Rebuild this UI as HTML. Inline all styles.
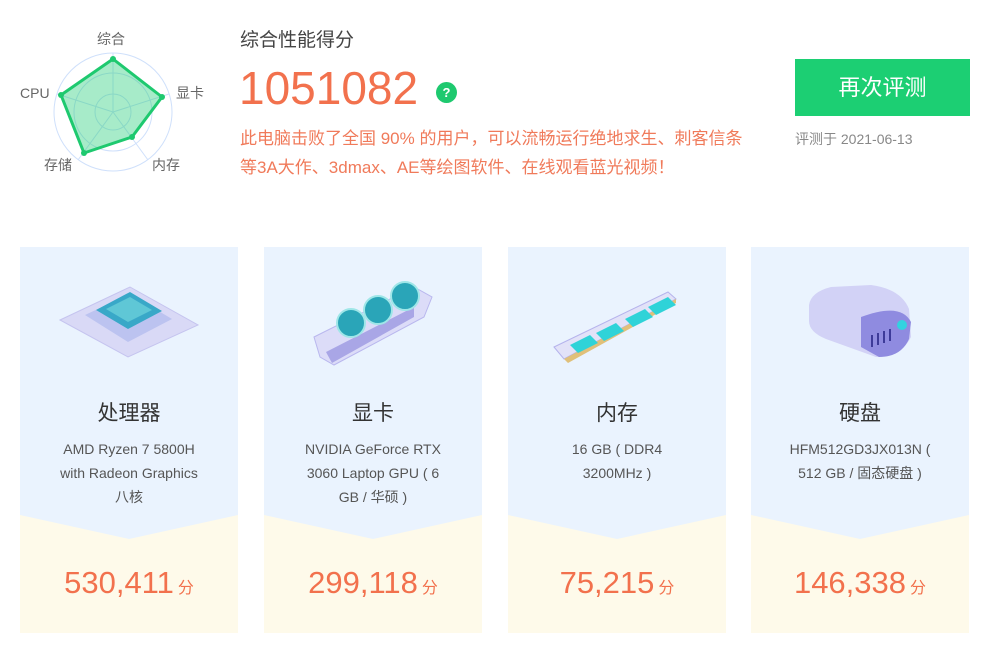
<!DOCTYPE html>
<html><head><meta charset="utf-8"><style>
*{margin:0;padding:0;box-sizing:border-box}
body{width:996px;height:661px;background:#fff;font-family:"Liberation Sans","Noto Sans CJK SC",sans-serif;position:relative;overflow:hidden}
.a{position:absolute;white-space:nowrap}
.card{position:absolute;top:247px;width:218px;height:386px;background:#fefaea;overflow:hidden}
.card .top{position:absolute;left:0;top:0;width:218px;height:292px;background:#eaf3fe;clip-path:polygon(0 0,100% 0,100% 268px,50% 292px,0 268px)}
.card .t{position:absolute;top:150px;width:100%;text-align:center;font-size:21px;color:#333}
.card .d{position:absolute;top:190px;width:100%;text-align:center;font-size:14px;line-height:24px;color:#555;white-space:nowrap}
.card .s{position:absolute;top:318px;width:100%;text-align:center;font-size:31px;color:#f2714d}
.card .s span{font-size:16px;margin-left:4px}
.card svg{position:absolute;left:0;top:0}
</style></head><body>
<svg class="a" style="left:0;top:20px" width="230" height="170">
<g fill="none" stroke="#cfe0fb" stroke-width="1">
<circle cx="113" cy="92" r="59"/><circle cx="113" cy="92" r="39"/><circle cx="113" cy="92" r="18"/>
<line x1="113" y1="92" x2="113" y2="33"/><line x1="113" y1="92" x2="169" y2="74"/><line x1="113" y1="92" x2="148" y2="140"/><line x1="113" y1="92" x2="78" y2="140"/><line x1="113" y1="92" x2="57" y2="74"/>
</g>
<polygon points="113,39 162,77 132,117 84,133 61,75" fill="rgba(34,204,119,0.4)" stroke="#1ec96f" stroke-width="3" stroke-linejoin="round"/>
<g fill="#1ec96f"><circle cx="113" cy="39" r="3"/><circle cx="162" cy="77" r="3"/><circle cx="132" cy="117" r="3"/><circle cx="84" cy="133" r="3"/><circle cx="61" cy="75" r="3"/></g>
<g font-size="14" fill="#666" font-family="Liberation Sans,Noto Sans CJK SC,sans-serif">
<text x="97" y="24">综合</text><text x="176" y="78">显卡</text><text x="20" y="78">CPU</text><text x="44" y="150">存储</text><text x="152" y="150">内存</text></g>
</svg>
<div class="a" style="left:240px;top:25px;font-size:19px;color:#444">综合性能得分</div>
<div class="a" style="left:239px;top:60px;font-size:46px;color:#f2714d;line-height:56px">1051082</div>
<div class="a" style="left:436px;top:82px;width:21px;height:21px;border-radius:50%;background:#1ec96f;color:#fff;font-size:13px;font-weight:bold;text-align:center;line-height:21px">?</div>
<div class="a" style="left:240px;top:124px;font-size:17px;line-height:29px;color:#f07a5a">此电脑击败了全国 90% 的用户，可以流畅运行绝地求生、刺客信条<br>等3A大作、3dmax、AE等绘图软件、在线观看蓝光视频！</div>
<div class="a" style="left:795px;top:59px;width:175px;height:57px;background:#1ccf73;color:#fff;font-size:22px;text-align:center;line-height:57px">再次评测</div>
<div class="a" style="left:795px;top:129px;font-size:14px;color:#888">评测于 2021-06-13</div>

<div class="card" style="left:20px"><div class="top"></div>
<svg width="218" height="150"><polygon points="40,73 110,40 178,78 108,110" fill="#d9d9f6" stroke="#c5c4ef"/><polygon points="65,68 110,47 152,72 108,95" fill="#bcc3f0"/><polygon points="76,63 110,45 142,64 108,82" fill="#39a8c8"/><polygon points="86,62 110,50 132,63 108,75" fill="#5fc7d6"/></svg>
<div class="t">处理器</div><div class="d">AMD Ryzen 7 5800H<br>with Radeon Graphics<br>八核</div><div class="s">530,411<span>分</span></div></div>

<div class="card" style="left:264px"><div class="top"></div>
<svg width="218" height="150"><polygon points="50,90 150,40 168,50 160,70 70,118 56,110" fill="#dcdcf8" stroke="#b9b7ee"/><polygon points="62,105 150,60 150,70 68,116" fill="#a9a6e6"/><g fill="#2aa5b8" stroke="#9fe6e8" stroke-width="2"><circle cx="87" cy="76" r="14"/><circle cx="114" cy="63" r="14"/><circle cx="141" cy="49" r="14"/></g></svg>
<div class="t">显卡</div><div class="d">NVIDIA GeForce RTX<br>3060 Laptop GPU ( 6<br>GB / 华硕 )</div><div class="s">299,118<span>分</span></div></div>

<div class="card" style="left:508px"><div class="top"></div>
<svg width="218" height="150"><polygon points="46,100 160,45 168,52 56,112" fill="#e2e2f8" stroke="#b5b3ec"/><polygon points="56,112 168,52 168,56 60,116" fill="#e0c07a"/><g fill="#2fd3d8"><polygon points="62,98 82,88 90,96 70,106"/><polygon points="88,86 108,76 116,84 96,94"/><polygon points="117,72 137,62 145,70 125,80"/><polygon points="140,60 160,50 168,58 148,68"/></g></svg>
<div class="t">内存</div><div class="d">16 GB ( DDR4<br>3200MHz )</div><div class="s">75,215<span>分</span></div></div>

<div class="card" style="left:751px"><div class="top"></div>
<svg width="218" height="150"><path d="M58,58 Q60,45 80,40 L120,38 Q150,42 158,62 L160,90 Q150,110 125,110 L75,92 Q58,85 58,74Z" fill="#d2d2f6"/><path d="M110,70 Q150,55 160,75 L158,92 Q150,110 128,110 L110,100Z" fill="#8f8be0"/><circle cx="151" cy="78" r="5" fill="#32d2e0"/><g stroke="#3d3a99" stroke-width="2"><line x1="121" y1="88" x2="121" y2="100"/><line x1="127" y1="86" x2="127" y2="98"/><line x1="133" y1="84" x2="133" y2="96"/><line x1="139" y1="82" x2="139" y2="94"/></g></svg>
<div class="t">硬盘</div><div class="d">HFM512GD3JX013N (<br>512 GB / 固态硬盘 )</div><div class="s">146,338<span>分</span></div></div>
</body></html>
